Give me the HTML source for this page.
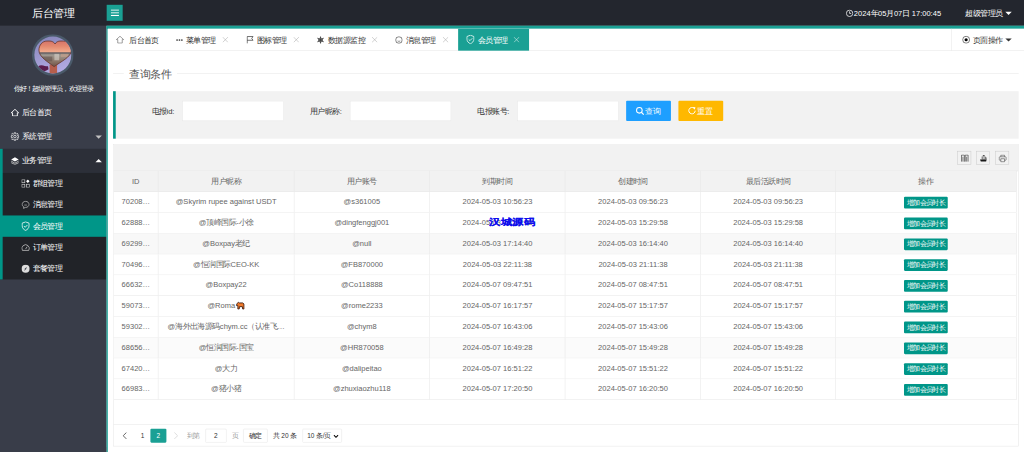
<!DOCTYPE html>
<html><head><meta charset="utf-8"><style>
html,body{margin:0;padding:0;width:1024px;height:452px;overflow:hidden;background:#fff}
*{box-sizing:border-box}
#root{position:absolute;left:0;top:0;width:1920px;height:848px;transform:scale(0.533333);transform-origin:0 0;font-family:"Liberation Sans",sans-serif;font-size:14.1px;color:#333;overflow:hidden;background:#fff}
.abs{position:absolute}
/* header */
#hdr{position:absolute;left:0;top:0;width:1920px;height:48px;background:#23262e;z-index:5}
#logo{position:absolute;left:0;top:0;width:200px;height:48px;line-height:48px;text-align:center;color:#fff;font-size:20px}
#ham{position:absolute;left:200px;top:9px;width:30px;height:30px;background:#1aa094}
#ham i{position:absolute;left:8px;width:15px;height:1.8px;background:#fff}
#clock{position:absolute;left:1601px;top:1px;height:48px;line-height:48px;color:#fff;font-size:14.1px;white-space:nowrap}
#admin{position:absolute;left:1810px;top:1px;height:48px;line-height:48px;color:#fff;font-size:14.1px;white-space:nowrap}
.caret{position:absolute;width:0;height:0;border-left:6px solid transparent;border-right:6px solid transparent;border-top:6px solid #fff}
/* sidebar */
#side{position:absolute;left:0;top:48px;width:200px;height:800px;background:#393d49;box-shadow:0 -10px 0 #393d49,10px 0 0 #393d49}
#greet{position:absolute;left:0;top:110px;width:200px;text-align:center;color:#fff;font-size:12.2px;line-height:16px;letter-spacing:-0.6px}
.nav{position:absolute;left:0;width:200px;color:#fff;font-size:14.1px}
.nav .t{position:absolute;left:41px;top:0;white-space:nowrap}
.nav svg{position:absolute}
/* content */
#content{position:absolute;left:200px;top:48px;width:1720px;height:800px;border-top:6px solid #1aa094;border-left:2px solid #009688;background:#fff;box-shadow:0 -10px 0 #1aa094}
#tabs{position:absolute;left:0;top:0;width:1718px;height:41px;border-bottom:1px solid #e6e6e6;background:#fff}
.tab{position:absolute;top:1.2px;height:41px;line-height:41px;white-space:nowrap;color:#333}
.tab .x{color:#999}
/* main */
#fs{position:absolute;left:10px;top:83px;width:1698px;height:1px;background:#e6e6e6}
#legend{position:absolute;left:30px;top:71px;padding:0 10px;background:#fff;font-size:20px;line-height:28px;color:#555}
#quote{position:absolute;left:10px;top:116.6px;width:1698px;height:89px;background:#f2f2f2;border-left:5px solid #009688}
.lbl{position:absolute;width:110px;text-align:right;padding-right:15px;line-height:38px;height:38px;font-size:14.1px;color:#333;white-space:nowrap}
.inp{position:absolute;width:190px;height:38px;background:#fff;border:1px solid #e6e6e6}
.btn{position:absolute;height:38px;line-height:37px;border-radius:2px;color:#fff;font-size:14.1px;text-align:center;white-space:nowrap}
#tbl{position:absolute;left:10px;top:216px;width:1698px;height:567px;border:1px solid #e6e6e6;background:#fff}
#tool{position:absolute;left:0;top:0;width:1696px;height:50px;background:#f2f2f2;border-bottom:1px solid #e6e6e6}
.ticon{position:absolute;top:12px;width:26px;height:26px;border:1px solid #ccc}
.tr{position:absolute;left:0;width:1693px;height:39px;border-bottom:1px solid #e6e6e6;background:#fff}
.tr.th{height:40px;background:#f2f2f2}
.tr.gray{background:#f8f8f8}
.tr.gray2{background:#fbfbfb}
.td{position:absolute;top:0;height:100%;border-right:1px solid #e6e6e6;padding:0 15px;line-height:37px;color:#666;white-space:nowrap;overflow:hidden}
.th .td{line-height:40.5px}
.xbtn{display:inline-block;height:22px;line-height:22px;padding:0 5px;font-size:12.2px;color:#fff;background:#009688;border-radius:2px;vertical-align:middle;position:relative;top:1px}
.emo{display:inline-block;vertical-align:middle;margin-left:1px;position:relative;top:-1px}
#page{position:absolute;left:0;top:524px;width:1696px;height:41px;border-top:1px solid #e6e6e6}
.pg{position:absolute;font-size:12.2px;color:#333;white-space:nowrap;line-height:26px;height:26px}
#wm{position:absolute;left:715px;top:351.3px;font-size:21px;line-height:22px;font-weight:bold;color:#0c0cee;white-space:nowrap;letter-spacing:0.6px;-webkit-text-stroke:0.3px #0c0cee;transform:scaleY(0.8);transform-origin:50% 50%}

</style></head><body>
<div id="root">
<div id="hdr">
  <div id="logo">后台管理</div>
  <div id="ham"><i style="top:9px;opacity:.8"></i><i style="top:14px;opacity:.8"></i><i style="top:19px"></i></div>
  <svg class="abs" style="left:1586px;top:18px" width="14" height="14" viewBox="0 0 14 14"><circle cx="7" cy="7" r="6" fill="none" stroke="#fff" stroke-width="1.4"/><path d="M7 3.2V7.2H10" fill="none" stroke="#fff" stroke-width="1.4"/></svg>
  <div id="clock">2024年05月07日 17:00:45</div>
  <div id="admin">超级管理员</div>
  <div class="caret" style="left:1885px;top:22px"></div>
</div>
<div id="side">
  <svg class="abs" style="left:60px;top:16px" width="78" height="78" viewBox="0 0 78 78">
    <defs>
      <linearGradient id="bgp" x1="0" y1="0" x2="0.3" y2="1"><stop offset="0" stop-color="#8282b6"/><stop offset="1" stop-color="#b2aae2"/></linearGradient>
      <linearGradient id="sky" x1="0" y1="0" x2="0" y2="1"><stop offset="0" stop-color="#d5746a"/><stop offset="0.2" stop-color="#e4896f"/><stop offset="0.42" stop-color="#f2aa8c"/><stop offset="0.46" stop-color="#5a585e"/><stop offset="0.54" stop-color="#a09a92"/><stop offset="0.8" stop-color="#8a7466"/><stop offset="1" stop-color="#6e5246"/></linearGradient>
      <clipPath id="cc"><circle cx="39" cy="39" r="34.6"/></clipPath>
      <clipPath id="hc"><path d="M43.3 18.5C39 12 33 13 28 13C19 13 13 21 13 30C13 43 30 52 41.5 61C53 52 74 43 74 30C74 21 67 13 59 13C53 13 47 12 43.3 18.5Z"/></clipPath>
    </defs>
    <circle cx="39" cy="39" r="39" fill="#4a5a6a"/>
    <g clip-path="url(#cc)">
      <rect x="0" y="0" width="78" height="78" fill="url(#bgp)"/>
      <rect x="33" y="57" width="14" height="30" fill="#b65e4c"/>
      <path d="M11 61q5-4 10-2q4 2 9 1l1 6q-5 4-10 4q-6 0-10-5z" fill="#5b1d4c"/>
      <path d="M43.3 18.5C39 12 33 13 28 13C19 13 13 21 13 30C13 43 30 52 41.5 61C53 52 74 43 74 30C74 21 67 13 59 13C53 13 47 12 43.3 18.5Z" fill="url(#sky)"/>
      <g clip-path="url(#hc)">
        <rect x="42" y="37" width="9" height="12" fill="#d8d2ca" opacity=".6"/>
        <rect x="18" y="42" width="20" height="9" fill="#4a3a38" opacity=".4"/>
        <rect x="54" y="37" width="14" height="6" fill="#c9a088" opacity=".6"/>
      </g>
      <path d="M43.3 18.5C39 12 33 13 28 13C19 13 13 21 13 30C13 43 30 52 41.5 61C53 52 74 43 74 30C74 21 67 13 59 13C53 13 47 12 43.3 18.5Z" fill="none" stroke="#6a3b32" stroke-width="1.6"/>
    </g>
  </svg>
  <div id="greet">你好！超级管理员，欢迎登录</div>
  <!-- nav items -->
  <div class="nav" style="top:140.6px;height:45px;line-height:45px"><span class="t">后台首页</span>
    <svg style="left:20px;top:15px" width="16" height="14" viewBox="0 0 16 14"><path d="M8 1L1 7.5H3.5V13.5H12.5V7.5H15Z" fill="none" stroke="#fff" stroke-width="1.7" stroke-linejoin="round"/></svg></div>
  <div class="nav" style="top:185.6px;height:45px;line-height:45px"><span class="t">系统管理</span>
    <svg style="left:20px;top:14.5px" width="16" height="16" viewBox="0 0 16 16"><path d="M13.25 6.72L15.49 6.71L15.49 9.29L13.25 9.28L12.62 10.80L14.21 12.39L12.39 14.21L10.80 12.62L9.28 13.25L9.29 15.49L6.71 15.49L6.72 13.25L5.20 12.62L3.61 14.21L1.79 12.39L3.38 10.80L2.75 9.28L0.51 9.29L0.51 6.71L2.75 6.72L3.38 5.20L1.79 3.61L3.61 1.79L5.20 3.38L6.72 2.75L6.71 0.51L9.29 0.51L9.28 2.75L10.80 3.38L12.39 1.79L14.21 3.61L12.62 5.20Z" fill="none" stroke="#fff" stroke-width="1.3" stroke-linejoin="round"/><circle cx="8" cy="8" r="2.4" fill="none" stroke="#fff" stroke-width="1.3"/></svg>
    <div class="caret" style="left:179px;top:20px;border-top-color:#c2c2c2"></div></div>
  <div class="nav" style="top:230.6px;height:45px;line-height:45px;background:#2c2f38"><span class="t">业务管理</span>
    <svg style="left:20px;top:15px" width="16" height="15" viewBox="0 0 16 15"><path d="M8 1L15 5L8 9L1 5Z" fill="#fff"/><path d="M1 8L8 12L15 8M1 11L8 14.5L15 11" fill="none" stroke="#ddd" stroke-width="1.4"/></svg>
    <div class="caret" style="left:179px;top:19px;border-top:none;border-bottom:6px solid #fff"></div></div>
  <div class="nav" style="top:275.6px;height:200px;background:#212328"></div>
  <div class="abs" style="left:0;top:230.6px;width:5px;height:245px;background:#009688"></div>
  <div class="nav" style="top:275.6px;height:40px;line-height:40px"><span class="t" style="left:61px">群组管理</span>
    <svg style="left:40px;top:12px" width="16" height="16" viewBox="0 0 16 16"><rect x="1" y="1" width="5.5" height="5.5" fill="none" stroke="#ccc" stroke-width="1.3"/><rect x="1" y="9.5" width="5.5" height="5.5" fill="none" stroke="#ccc" stroke-width="1.3"/><rect x="9.5" y="9.5" width="5.5" height="5.5" fill="none" stroke="#ccc" stroke-width="1.3"/><path d="M12.2 0.5L15.5 3.8L12.2 7.1L8.9 3.8Z" fill="#fff"/></svg></div>
  <div class="nav" style="top:315.6px;height:40px;line-height:40px"><span class="t" style="left:61px">消息管理</span>
    <svg style="left:40px;top:12px" width="16" height="16" viewBox="0 0 16 16"><path d="M8 1.5C4.4 1.5 1.5 4 1.5 7.2C1.5 9.3 2.8 11 4.6 12L4.3 14.8L7.2 12.9C7.5 12.9 7.7 13 8 13C11.6 13 14.5 10.4 14.5 7.2C14.5 4 11.6 1.5 8 1.5Z" fill="none" stroke="#ccc" stroke-width="1.3"/><path d="M5.5 8.5h5" stroke="#ccc" stroke-width="1.1"/></svg></div>
  <div class="nav" style="top:355.6px;height:40px;line-height:40px;background:#009688"><span class="t" style="left:61px">会员管理</span>
    <svg style="left:40px;top:11px" width="16" height="18" viewBox="0 0 16 18"><path d="M8 1L14.5 3.5V8.5C14.5 12.5 11.5 15.5 8 17C4.5 15.5 1.5 12.5 1.5 8.5V3.5Z" fill="none" stroke="#fff" stroke-width="1.5"/><path d="M4.8 8.8L7.2 11.2L11.5 6.8" fill="none" stroke="#fff" stroke-width="1.5"/></svg></div>
  <div class="nav" style="top:395.6px;height:40px;line-height:40px"><span class="t" style="left:61px">订单管理</span>
    <svg style="left:40px;top:13px" width="16" height="14" viewBox="0 0 16 14"><path d="M2 12.5A7 7 0 1 1 14 12.5Z" fill="none" stroke="#ccc" stroke-width="1.4" stroke-linejoin="round"/><path d="M8 10L11 5.5" stroke="#ccc" stroke-width="1.4"/></svg></div>
  <div class="nav" style="top:435.6px;height:40px;line-height:40px"><span class="t" style="left:61px">套餐管理</span>
    <svg style="left:40px;top:12px" width="16" height="16" viewBox="0 0 16 16"><circle cx="8" cy="8" r="7.5" fill="#ddd"/><path d="M10.5 4L7 7.5L5.5 12L9 8.5Z" fill="#393d49"/></svg></div>
</div>
<div id="content">
  <div id="tabs">
    <svg class="abs" style="left:15px;top:13px" width="16" height="15" viewBox="0 0 16 15"><path d="M8 1L1.2 7.2H3.8V13.8H12.2V7.2H14.8Z" fill="none" stroke="#666" stroke-width="1.2" stroke-linejoin="round"/></svg>
    <div class="tab" style="left:40px">后台首页</div>
    <svg class="abs" style="left:128px;top:19px" width="13" height="4" viewBox="0 0 13 4"><circle cx="2" cy="2" r="1.6" fill="#333"/><circle cx="6.5" cy="2" r="1.6" fill="#333"/><circle cx="11" cy="2" r="1.6" fill="#333"/></svg>
    <div class="tab" style="left:146px">菜单管理</div>
    <svg class="abs x" style="left:215px;top:15px" width="11" height="11" viewBox="0 0 11 11"><path d="M0.5 0.5L10.5 10.5M10.5 0.5L0.5 10.5" stroke="#aaa" stroke-width="1"/></svg>
    <svg class="abs" style="left:260px;top:13px" width="14" height="15" viewBox="0 0 14 15"><path d="M1.5 14.5V1.5H12.5L10 5L12.5 8.5H1.5" fill="none" stroke="#333" stroke-width="1.3"/></svg>
    <div class="tab" style="left:279.5px">图标管理</div>
    <svg class="abs x" style="left:348px;top:15px" width="11" height="11" viewBox="0 0 11 11"><path d="M0.5 0.5L10.5 10.5M10.5 0.5L0.5 10.5" stroke="#aaa" stroke-width="1"/></svg>
    <svg class="abs" style="left:392px;top:13.5px" width="14" height="14" viewBox="0 0 14 14"><g stroke="#333" stroke-width="1.5" fill="none" stroke-linecap="round"><path d="M7 0.8V13.2M1.63 3.9L12.37 10.1M1.63 10.1L12.37 3.9"/><path d="M7.00 2.80L5.59 4.21M7.00 2.80L8.41 4.21M10.64 4.90L8.71 4.38M10.64 4.90L10.12 6.83M3.36 4.90L3.88 6.83M3.36 4.90L5.29 4.38M7.00 11.20L8.41 9.79M7.00 11.20L5.59 9.79M3.36 9.10L5.29 9.62M3.36 9.10L3.88 7.17M10.64 9.10L10.12 7.17M10.64 9.10L8.71 9.62" stroke-width="1.1"/></g></svg>
    <div class="tab" style="left:413px">数据源监控</div>
    <svg class="abs x" style="left:495px;top:15px" width="11" height="11" viewBox="0 0 11 11"><path d="M0.5 0.5L10.5 10.5M10.5 0.5L0.5 10.5" stroke="#aaa" stroke-width="1"/></svg>
    <svg class="abs" style="left:539px;top:14px" width="14" height="14" viewBox="0 0 14 14"><circle cx="7" cy="7" r="6.2" fill="none" stroke="#333" stroke-width="1.2"/><path d="M4.5 8.8Q7 10.5 9.5 8.8" fill="none" stroke="#333" stroke-width="1"/></svg>
    <div class="tab" style="left:559px">消息管理</div>
    <svg class="abs x" style="left:628px;top:15px" width="11" height="11" viewBox="0 0 11 11"><path d="M0.5 0.5L10.5 10.5M10.5 0.5L0.5 10.5" stroke="#aaa" stroke-width="1"/></svg>
    <div class="abs" style="left:657px;top:0;width:133px;height:41px;background:#1aa094"></div>
    <svg class="abs" style="left:672px;top:11px" width="16" height="18" viewBox="0 0 16 18"><path d="M8 1L14.5 3.5V8.5C14.5 12.5 11.5 15.5 8 17C4.5 15.5 1.5 12.5 1.5 8.5V3.5Z" fill="none" stroke="#fff" stroke-width="1.4"/><path d="M4.8 8.8L7.2 11.2L11.5 6.8" fill="none" stroke="#fff" stroke-width="1.4"/></svg>
    <div class="tab" style="left:694px;color:#fff">会员管理</div>
    <svg class="abs x" style="left:761px;top:15px" width="11" height="11" viewBox="0 0 11 11"><path d="M0.5 0.5L10.5 10.5M10.5 0.5L0.5 10.5" stroke="#e8f5f3" stroke-width="1"/></svg>
    <div class="abs" style="left:1582px;top:0;width:1px;height:41px;background:#e6e6e6"></div>
    <svg class="abs" style="left:1602px;top:13px" width="15" height="15" viewBox="0 0 15 15"><circle cx="7.5" cy="7.5" r="6.5" fill="none" stroke="#333" stroke-width="1.2"/><circle cx="7.5" cy="7.5" r="3" fill="#000"/></svg>
    <div class="tab" style="left:1622px">页面操作</div>
    <div class="caret" style="left:1683px;top:18px;border-top-color:#333"></div>
  </div>
  <div id="fs"></div><div id="legend">查询条件</div>
  <div id="quote">
    <div class="lbl" style="left:15px;top:19px">电报id:</div>
    <div class="inp" style="left:125px;top:18px"></div>
    <div class="lbl" style="left:329px;top:19px">用户昵称:</div>
    <div class="inp" style="left:439px;top:18px"></div>
    <div class="lbl" style="left:643px;top:19px">电报账号:</div>
    <div class="inp" style="left:753px;top:18px"></div>
    <div class="btn" style="left:957px;top:18.5px;width:84px;height:37.5px;background:#1e9fff"><svg class="abs" style="left:18px;top:11px" width="16" height="16" viewBox="0 0 16 16"><circle cx="6.8" cy="6.8" r="5.3" fill="none" stroke="#fff" stroke-width="1.9"/><path d="M10.5 10.5L15 15" stroke="#fff" stroke-width="2.2"/></svg><span class="abs" style="left:35px;top:0;font-size:15.5px">查询</span></div>
    <div class="btn" style="left:1055px;top:18.5px;width:84px;height:37.5px;background:#ffb800"><svg class="abs" style="left:17px;top:10px" width="17" height="17" viewBox="0 0 17 17"><path d="M14.5 8.5A6 6 0 1 1 12.3 3.8" fill="none" stroke="#fff" stroke-width="1.8"/><path d="M10 1.5L15 2L13.5 6.8Z" fill="#fff"/></svg><span class="abs" style="left:34px;top:0;font-size:15.5px">重置</span></div>
  </div>
  <div id="tbl">
    <div id="tool">
      <div class="ticon" style="left:1581.6px"><svg class="abs" style="left:5px;top:5px" width="16" height="16" viewBox="0 0 16 16"><g fill="none" stroke="#444" stroke-width="1.3"><path d="M1.8 14V1.8H7.2V14M8.8 14V1.8H14.2V14"/><path d="M4.5 5V14M11.5 5V14"/></g></svg></div>
      <div class="ticon" style="left:1617px"><svg class="abs" style="left:5px;top:5px" width="16" height="16" viewBox="0 0 16 16"><rect x="6.8" y="1.8" width="3.4" height="2" fill="#444"/><path d="M4.6 4.6H11.5L14 7V10.2H4.6Z" fill="#777"/><path d="M6.5 5.5H10.5V9H6.5Z" fill="#bbb"/><path d="M1.5 10.2H14L13 14H3Z" fill="#1a1a1a"/></svg></div>
      <div class="ticon" style="left:1652.6px"><svg class="abs" style="left:5px;top:5px" width="16" height="16" viewBox="0 0 16 16"><path d="M4.5 5V2H11.5V5" fill="none" stroke="#555" stroke-width="1.2"/><path d="M4.3 11.5H2.6C2 11.5 1.5 11 1.5 10.4V6.2C1.5 5.6 2 5 2.6 5H13.4C14 5 14.5 5.6 14.5 6.2V10.4C14.5 11 14 11.5 13.4 11.5H11.7" fill="none" stroke="#555" stroke-width="1.2"/><path d="M4.5 8.6H11.5V14.3H4.5Z" fill="none" stroke="#555" stroke-width="1.2"/></svg></div>
    </div>
    <div style="position:absolute;left:0;top:49px;width:1696px;height:475px;overflow:hidden">
    <div class="tr th" style="top:0"><div class="td" style="left:0px;width:84px;text-align:center">ID</div><div class="td" style="left:84px;width:255px;text-align:center">用户昵称</div><div class="td" style="left:339px;width:254px;text-align:center">用户账号</div><div class="td" style="left:593px;width:254.4000000000001px;text-align:center">到期时间</div><div class="td" style="left:847.4000000000001px;width:254.0px;text-align:center">创建时间</div><div class="td" style="left:1101.4px;width:252.79999999999995px;text-align:center">最后活跃时间</div><div class="td" style="left:1354.2px;width:338.79999999999995px;text-align:center">操作</div></div>
<div class="tr" style="top:40px"><div class="td" style="left:0px;width:84px;text-align:left">70208…</div><div class="td" style="left:84px;width:255px;text-align:center">@Skyrim rupee against USDT</div><div class="td" style="left:339px;width:254px;text-align:center">@s361005</div><div class="td" style="left:593px;width:254.4000000000001px;text-align:center">2024-05-03 10:56:23</div><div class="td" style="left:847.4000000000001px;width:254.0px;text-align:center">2024-05-03 09:56:23</div><div class="td" style="left:1101.4px;width:252.79999999999995px;text-align:center">2024-05-03 09:56:23</div><div class="td" style="left:1354.2px;width:338.79999999999995px;text-align:center"><span class="xbtn">增加会员时长</span></div></div>
<div class="tr" style="top:79px"><div class="td" style="left:0px;width:84px;text-align:left">62888…</div><div class="td" style="left:84px;width:255px;text-align:center">@顶峰国际-小徐</div><div class="td" style="left:339px;width:254px;text-align:center">@dingfenggj001</div><div class="td" style="left:593px;width:254.4000000000001px;text-align:center">2024-05-03 16:29:58</div><div class="td" style="left:847.4000000000001px;width:254.0px;text-align:center">2024-05-03 15:29:58</div><div class="td" style="left:1101.4px;width:252.79999999999995px;text-align:center">2024-05-03 15:29:58</div><div class="td" style="left:1354.2px;width:338.79999999999995px;text-align:center"><span class="xbtn">增加会员时长</span></div></div>
<div class="tr gray" style="top:118px"><div class="td" style="left:0px;width:84px;text-align:left">69299…</div><div class="td" style="left:84px;width:255px;text-align:center">@Boxpay老纪</div><div class="td" style="left:339px;width:254px;text-align:center">@null</div><div class="td" style="left:593px;width:254.4000000000001px;text-align:center">2024-05-03 17:14:40</div><div class="td" style="left:847.4000000000001px;width:254.0px;text-align:center">2024-05-03 16:14:40</div><div class="td" style="left:1101.4px;width:252.79999999999995px;text-align:center">2024-05-03 16:14:40</div><div class="td" style="left:1354.2px;width:338.79999999999995px;text-align:center"><span class="xbtn">增加会员时长</span></div></div>
<div class="tr" style="top:157px"><div class="td" style="left:0px;width:84px;text-align:left">70496…</div><div class="td" style="left:84px;width:255px;text-align:center">@恒润国际CEO-KK</div><div class="td" style="left:339px;width:254px;text-align:center">@FB870000</div><div class="td" style="left:593px;width:254.4000000000001px;text-align:center">2024-05-03 22:11:38</div><div class="td" style="left:847.4000000000001px;width:254.0px;text-align:center">2024-05-03 21:11:38</div><div class="td" style="left:1101.4px;width:252.79999999999995px;text-align:center">2024-05-03 21:11:38</div><div class="td" style="left:1354.2px;width:338.79999999999995px;text-align:center"><span class="xbtn">增加会员时长</span></div></div>
<div class="tr" style="top:196px"><div class="td" style="left:0px;width:84px;text-align:left">66632…</div><div class="td" style="left:84px;width:255px;text-align:center">@Boxpay22</div><div class="td" style="left:339px;width:254px;text-align:center">@Co118888</div><div class="td" style="left:593px;width:254.4000000000001px;text-align:center">2024-05-07 09:47:51</div><div class="td" style="left:847.4000000000001px;width:254.0px;text-align:center">2024-05-07 08:47:51</div><div class="td" style="left:1101.4px;width:252.79999999999995px;text-align:center">2024-05-07 08:47:51</div><div class="td" style="left:1354.2px;width:338.79999999999995px;text-align:center"><span class="xbtn">增加会员时长</span></div></div>
<div class="tr" style="top:235px"><div class="td" style="left:0px;width:84px;text-align:left">59073…</div><div class="td" style="left:84px;width:255px;text-align:center">@Roma<svg class="emo" width="17" height="16" viewBox="0 0 17 16"><path d="M2 5 L5 1.5 L7 3 L13 3 L15.5 5 L15.5 14.5 L13 14.5 L12.5 10 L7 10 L6.5 14.5 L4 14.5 L4 8 L1.5 8 Z" fill="#f07a2a" stroke="#3a1a10" stroke-width="1.6" stroke-linejoin="round"/></svg></div><div class="td" style="left:339px;width:254px;text-align:center">@rome2233</div><div class="td" style="left:593px;width:254.4000000000001px;text-align:center">2024-05-07 16:17:57</div><div class="td" style="left:847.4000000000001px;width:254.0px;text-align:center">2024-05-07 15:17:57</div><div class="td" style="left:1101.4px;width:252.79999999999995px;text-align:center">2024-05-07 15:17:57</div><div class="td" style="left:1354.2px;width:338.79999999999995px;text-align:center"><span class="xbtn">增加会员时长</span></div></div>
<div class="tr" style="top:274px"><div class="td" style="left:0px;width:84px;text-align:left">59302…</div><div class="td" style="left:84px;width:255px;text-align:center">@海外出海源码chym.cc（认准飞…</div><div class="td" style="left:339px;width:254px;text-align:center">@chym8</div><div class="td" style="left:593px;width:254.4000000000001px;text-align:center">2024-05-07 16:43:06</div><div class="td" style="left:847.4000000000001px;width:254.0px;text-align:center">2024-05-07 15:43:06</div><div class="td" style="left:1101.4px;width:252.79999999999995px;text-align:center">2024-05-07 15:43:06</div><div class="td" style="left:1354.2px;width:338.79999999999995px;text-align:center"><span class="xbtn">增加会员时长</span></div></div>
<div class="tr gray2" style="top:313px"><div class="td" style="left:0px;width:84px;text-align:left">68656…</div><div class="td" style="left:84px;width:255px;text-align:center">@恒润国际-国宝</div><div class="td" style="left:339px;width:254px;text-align:center">@HR870058</div><div class="td" style="left:593px;width:254.4000000000001px;text-align:center">2024-05-07 16:49:28</div><div class="td" style="left:847.4000000000001px;width:254.0px;text-align:center">2024-05-07 15:49:28</div><div class="td" style="left:1101.4px;width:252.79999999999995px;text-align:center">2024-05-07 15:49:28</div><div class="td" style="left:1354.2px;width:338.79999999999995px;text-align:center"><span class="xbtn">增加会员时长</span></div></div>
<div class="tr" style="top:352px"><div class="td" style="left:0px;width:84px;text-align:left">67420…</div><div class="td" style="left:84px;width:255px;text-align:center">@大力</div><div class="td" style="left:339px;width:254px;text-align:center">@dalipeitao</div><div class="td" style="left:593px;width:254.4000000000001px;text-align:center">2024-05-07 16:51:22</div><div class="td" style="left:847.4000000000001px;width:254.0px;text-align:center">2024-05-07 15:51:22</div><div class="td" style="left:1101.4px;width:252.79999999999995px;text-align:center">2024-05-07 15:51:22</div><div class="td" style="left:1354.2px;width:338.79999999999995px;text-align:center"><span class="xbtn">增加会员时长</span></div></div>
<div class="tr" style="top:391px"><div class="td" style="left:0px;width:84px;text-align:left">66983…</div><div class="td" style="left:84px;width:255px;text-align:center">@猪小猪</div><div class="td" style="left:339px;width:254px;text-align:center">@zhuxiaozhu118</div><div class="td" style="left:593px;width:254.4000000000001px;text-align:center">2024-05-07 17:20:50</div><div class="td" style="left:847.4000000000001px;width:254.0px;text-align:center">2024-05-07 16:20:50</div><div class="td" style="left:1101.4px;width:252.79999999999995px;text-align:center">2024-05-07 16:20:50</div><div class="td" style="left:1354.2px;width:338.79999999999995px;text-align:center"><span class="xbtn">增加会员时长</span></div></div>
    </div>
    <div id="page">
      <svg class="abs" style="left:17px;top:14px" width="8" height="14" viewBox="0 0 8 14"><path d="M7 1L1 7L7 13" fill="none" stroke="#333" stroke-width="1.4"/></svg>
      <div class="pg" style="left:51px;top:9px">1</div>
      <div class="pg" style="left:68.6px;top:8px;width:30.4px;text-align:center;background:#1aa094;color:#fff;border-radius:2px">2</div>
      <svg class="abs" style="left:113px;top:14px" width="8" height="14" viewBox="0 0 8 14"><path d="M1 1L7 7L1 13" fill="none" stroke="#d2d2d2" stroke-width="1.4"/></svg>
      <div class="pg" style="left:137px;top:9px;color:#999">到第</div>
      <div class="pg" style="left:171.5px;top:8px;width:40px;text-align:center;border:1px solid #e6e6e6;border-radius:2px;line-height:24px">2</div>
      <div class="pg" style="left:222px;top:9px;color:#999">页</div>
      <div class="pg" style="left:242.6px;top:8px;width:46px;text-align:center;border:1px solid #e6e6e6;border-radius:2px;line-height:24px">确定</div>
      <div class="pg" style="left:299px;top:9px">共 20 条</div>
      <div class="pg" style="left:354px;top:8px;width:74px;padding-left:8px;border:1px solid #e6e6e6;border-radius:2px;line-height:24px">10 条/页</div>
      <svg class="abs" style="left:412px;top:19px" width="10" height="7" viewBox="0 0 10 7"><path d="M1 1L5 5L9 1" fill="none" stroke="#000" stroke-width="2"/></svg>
    </div>
  </div>
  <div id="wm">汉城源码</div>
</div>

</div>
</body></html>
